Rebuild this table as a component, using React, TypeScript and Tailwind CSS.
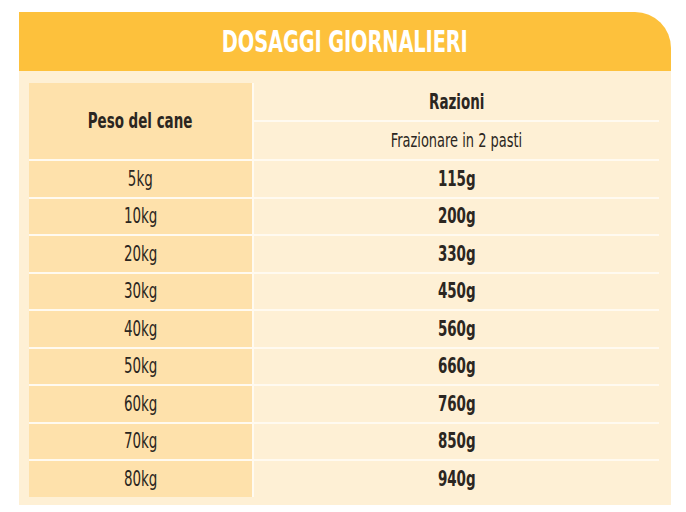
const rows = [
  ["5kg", "115g"],
  ["10kg", "200g"],
  ["20kg", "330g"],
  ["30kg", "450g"],
  ["40kg", "560g"],
  ["50kg", "660g"],
  ["60kg", "760g"],
  ["70kg", "850g"],
  ["80kg", "940g"],
];

function Txt({ children, bold }: { children: React.ReactNode; bold?: boolean }) {
  return (
    <span
      className={`inline-block scale-x-[0.68] text-[22px] leading-none text-[#2b2621] ${
        bold ? "font-bold" : "font-normal"
      }`}
    >
      {children}
    </span>
  );
}

export default function App() {
  return (
    <div className="w-[686px] h-[512px] bg-white pt-[12px] pl-[19px] font-['DejaVu_Sans_Condensed','DejaVu_Sans',sans-serif]">
      <div className="w-[652px]">
        {/* Header */}
        <div className="h-[59px] bg-[#fdc13c] rounded-tr-[36px] flex items-center justify-center">
          <span className="inline-block scale-x-[0.72] text-[30px] font-bold text-white leading-none tracking-[-0.2px]">
            DOSAGGI GIORNALIERI
          </span>
        </div>

        {/* Body */}
        <div className="bg-[#fef0d5] pt-[12px] pl-[10px] pr-[12px] pb-[8px]">
          <div className="grid grid-cols-[223px_1fr] gap-[2px] bg-[#fffaf0]">
            <div className="row-span-2 bg-[#fee1ab] flex items-center justify-center">
              <Txt bold>Peso del cane</Txt>
            </div>
            <div className="h-[37px] bg-[#fef0d5] flex items-center justify-center">
              <Txt bold>Razioni</Txt>
            </div>
            <div className="h-[37px] bg-[#fef0d5] flex items-center justify-center">
              <span className="inline-block scale-x-[0.76] text-[19px] leading-none text-[#2b2621]">
                Frazionare in 2 pasti
              </span>
            </div>
            {rows.map(([kg, g]) => (
              <div key={kg} className="contents">
                <div className="h-[35.5px] bg-[#fee1ab] flex items-center justify-center">
                  <Txt>{kg}</Txt>
                </div>
                <div className="h-[35.5px] bg-[#fef0d5] flex items-center justify-center">
                  <Txt bold>{g}</Txt>
                </div>
              </div>
            ))}
          </div>
        </div>
      </div>
    </div>
  );
}
